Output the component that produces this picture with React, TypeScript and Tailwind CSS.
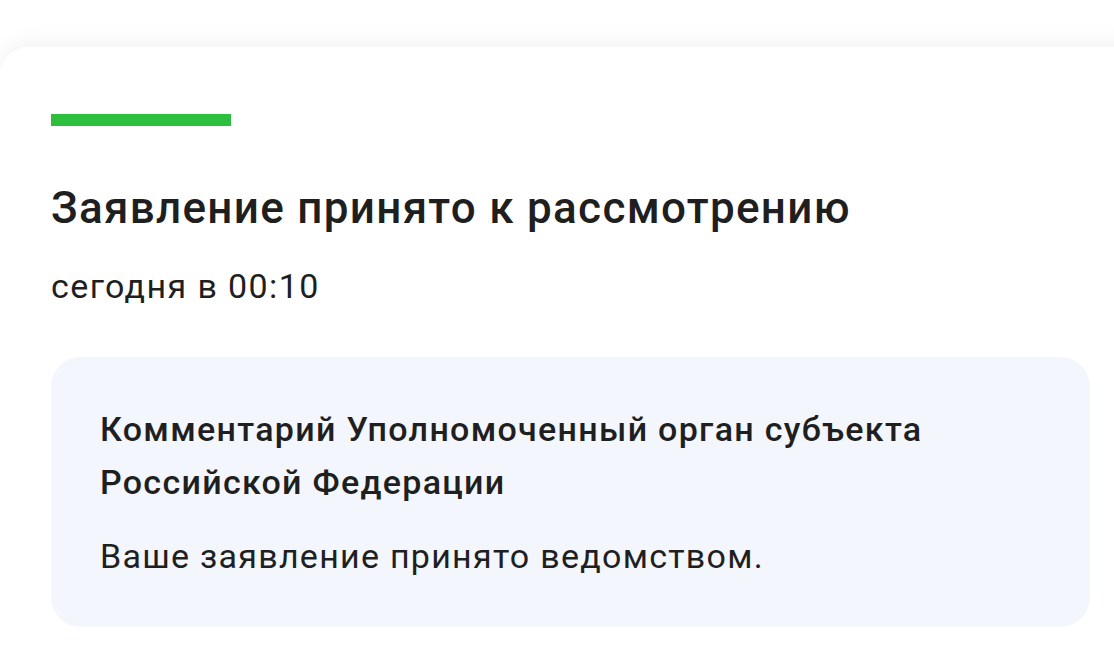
import React from 'react';

const App: React.FC = () => {
  return (
    <div className="w-[1114px] h-[670px] overflow-hidden bg-white" style={{ fontFamily: 'Roboto, "Noto Sans", sans-serif' }}>
      <div className="mt-[47px] mr-[-40px] h-[700px] rounded-tl-[28px] rounded-tr-[28px] bg-white shadow-[0_-6px_22px_rgba(0,0,0,0.05)] pl-[51px] pr-[64px] pt-[67px]">
        {/* status bar */}
        <div className="w-[180px] h-[12px] bg-[#2dbe3e]" />

        <h1 className="mt-[56px] text-[44px] leading-[52px] font-medium text-[#1f1f1f] tracking-[1.3px]">
          Заявление принято к рассмотрению
        </h1>
        <p className="mt-[32px] text-[34px] leading-[40px] text-[#1f1f1f] tracking-[1.4px]">сегодня в 00:10</p>

        {/* comment block */}
        <div className="mt-[51px] w-[1039px] rounded-[30px] bg-[#f3f6fc] px-[49px] pt-[46px] pb-[51px]">
          <div className="text-[34px] leading-[53px] font-medium text-[#1f1f1f] tracking-[1.3px]">
            Комментарий Уполномоченный орган субъекта
            <br />
            Российской Федерации
          </div>
          <div className="mt-[27px] text-[34px] leading-[40px] text-[#1f1f1f] tracking-[1.27px]">
            Ваше заявление принято ведомством.
          </div>
        </div>
      </div>
    </div>
  );
};

export default App;
